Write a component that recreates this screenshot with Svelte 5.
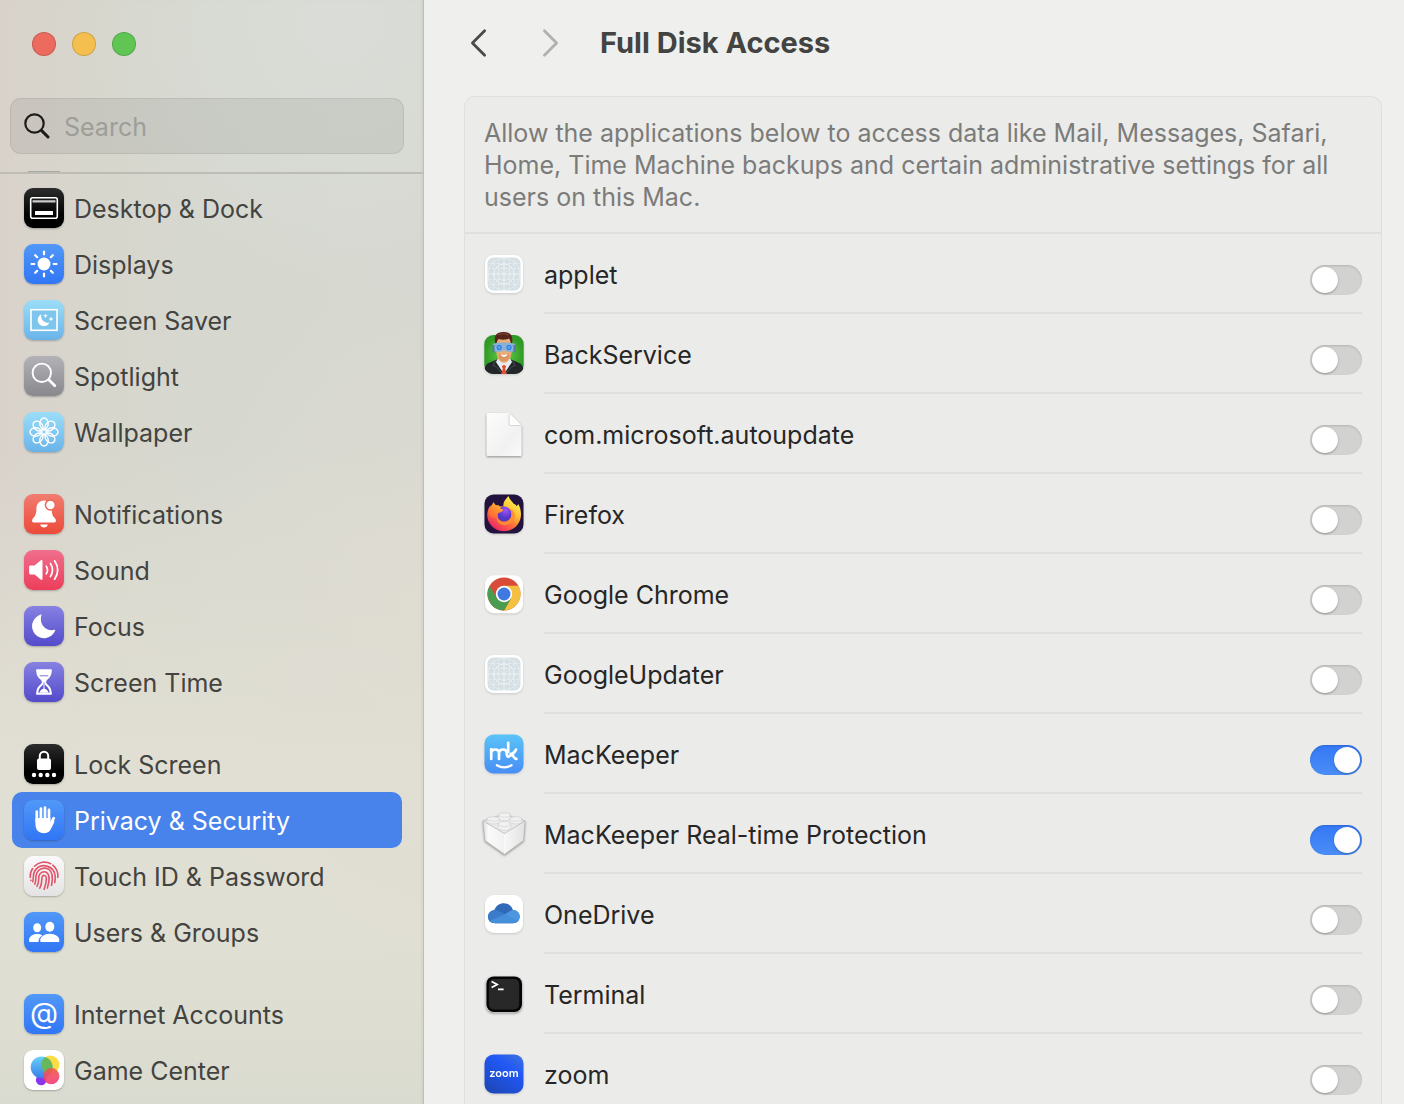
<script lang="ts">
  interface NavItem {
    id: string;
    label: string;
  }

  interface App {
    id: string;
    icon: string;
    name: string;
    allowed: boolean;
  }

  const groups: NavItem[][] = [
    [
      { id: 'desktop', label: 'Desktop & Dock' },
      { id: 'displays', label: 'Displays' },
      { id: 'screensaver', label: 'Screen Saver' },
      { id: 'spotlight', label: 'Spotlight' },
      { id: 'wallpaper', label: 'Wallpaper' },
    ],
    [
      { id: 'notifications', label: 'Notifications' },
      { id: 'sound', label: 'Sound' },
      { id: 'focus', label: 'Focus' },
      { id: 'screentime', label: 'Screen Time' },
    ],
    [
      { id: 'lock', label: 'Lock Screen' },
      { id: 'privacy', label: 'Privacy & Security' },
      { id: 'touchid', label: 'Touch ID & Password' },
      { id: 'users', label: 'Users & Groups' },
    ],
    [
      { id: 'internet', label: 'Internet Accounts' },
      { id: 'gamecenter', label: 'Game Center' },
    ],
  ];

  let apps = $state<App[]>([
    { id: 'applet', icon: 'generic', name: 'applet', allowed: false },
    { id: 'backservice', icon: 'agent', name: 'BackService', allowed: false },
    { id: 'autoupdate', icon: 'document', name: 'com.microsoft.autoupdate', allowed: false },
    { id: 'firefox', icon: 'firefox', name: 'Firefox', allowed: false },
    { id: 'chrome', icon: 'chrome', name: 'Google Chrome', allowed: false },
    { id: 'updater', icon: 'generic', name: 'GoogleUpdater', allowed: false },
    { id: 'mackeeper', icon: 'mackeeper', name: 'MacKeeper', allowed: true },
    { id: 'realtime', icon: 'brick', name: 'MacKeeper Real-time Protection', allowed: true },
    { id: 'onedrive', icon: 'onedrive', name: 'OneDrive', allowed: false },
    { id: 'terminal', icon: 'terminal', name: 'Terminal', allowed: false },
    { id: 'zoom', icon: 'zoom', name: 'zoom', allowed: false },
  ]);

  let selected = $state('privacy');
  let query = $state('');

  const petals = [0, 45, 90, 135, 180, 225, 270, 315];
</script>

{#snippet navIcon(id: string)}
  <svg class="tile {id}" viewBox="0 0 40 40" aria-hidden="true">
    {#if id === 'desktop'}
      <rect x="6.7" y="9.7" width="26.6" height="20.6" rx="2" fill="none" stroke="#fff" stroke-width="1.6" />
      <path d="M8.5 13.4h23" stroke="#ccc" stroke-width="2.2" />
      <rect x="11" y="23" width="18" height="4" rx=".6" fill="#fff" />
    {:else if id === 'displays'}
      <circle cx="20" cy="20" r="6.5" fill="#fff" />
      {#each petals as angle}
        <path d="M20 7.5v2.8" transform="rotate({angle} 20 20)" stroke="#fff" stroke-width="2.2" stroke-linecap="round" />
      {/each}
    {:else if id === 'screensaver'}
      <rect x="7" y="9.7" width="26" height="20.6" fill="#7dc5ec" stroke="#fff" stroke-width="1.6" />
      <path d="M17.5 14.2a6.2 6.2 0 1 0 8 8.4 6.6 6.6 0 0 1-8-8.4z" fill="#fff" />
      <path d="M21.5 13.4l.7 1.7 1.7.7-1.7.7-.7 1.7-.7-1.7-1.7-.7 1.7-.7zM27 16.4l.7 1.9 1.9.7-1.9.7-.7 1.9-.7-1.9-1.9-.7 1.9-.7z" fill="#fff" />
    {:else if id === 'spotlight'}
      <circle cx="17.8" cy="16.8" r="9.2" fill="none" stroke="#fff" stroke-width="1.9" />
      <path d="M24.8 23.8l6 6" stroke="#fff" stroke-width="2.7" stroke-linecap="round" />
    {:else if id === 'wallpaper'}
      {#each petals as angle}
        <ellipse cx="20" cy="11.6" rx="4.2" ry="5.6" transform="rotate({angle} 20 20)" fill="none" stroke="#fff" stroke-width="1.4" />
      {/each}
      <circle cx="20" cy="20" r="1.8" fill="#8fd0f2" stroke="#fff" stroke-width=".8" />
    {:else if id === 'notifications'}
      <path d="M20 6.6c-5 0-7.5 3.6-7.6 8.2-.1 5.5-1.2 7.3-3.5 9.7-1.2 1.3-1.3 3.9.8 3.9h20.6c2.1 0 2-2.6.8-3.9-2.3-2.4-3.4-4.2-3.5-9.7-.1-4.6-2.6-8.2-7.6-8.2z" fill="#fff" />
      <path d="M16.2 30.4h7.6c-.4 1.8-1.8 3-3.8 3s-3.4-1.2-3.8-3z" fill="#fff" />
      <circle cx="26.4" cy="11" r="5" fill="#fff" stroke="#f06455" stroke-width="1.5" />
    {:else if id === 'sound'}
      <path d="M6.4 15.6h4.2l6-5.2c.9-.7 1.9-.3 1.9.9v17.4c0 1.2-1 1.6-1.9.9l-6-5.2H6.4c-.8 0-1.3-.5-1.3-1.3v-6.2c0-.8.5-1.3 1.3-1.3z" fill="#fff" />
      <path d="M22.3 16.2q2.4 3.8 0 7.6M26.4 13.4q4.2 6.6 0 13.2M30.6 10.8q6.2 9.2 0 18.4" fill="none" stroke="#fff" stroke-width="1.7" stroke-linecap="round" />
    {:else if id === 'focus'}
      <path d="M16.8 8.6c.5-.3.9 0 .7.5-2.9 8.2 4 17 13 14.7.6-.1 1 .3.7.8A12 12 0 1 1 16.8 8.6z" fill="#fff" />
    {:else if id === 'screentime'}
      <path d="M13.2 7.2h13.6c1.3 0 1.300 1.4.9 2.400-.3 4.600-2.600 6.500-4.700 8.500-1.200 1.100-1.200 2.700 0 3.800 2.100 2 4.400 3.900 4.700 8.500.4 1 .4 2.400-.9 2.400H13.200c-1.300 0-1.300-1.400-.9-2.400.3-4.600 2.600-6.500 4.700-8.500 1.200-1.100 1.200-2.700 0-3.800-2.100-2-4.400-3.900-4.700-8.500-.4-1-.4-2.400.9-2.400z" fill="#fff" />
      <path d="M14.400 30.800c.2-4 2-5.400 3.800-7.200 1-1 1.300-2 1.300-3.600h1c0 1.600.3 2.600 1.300 3.600 1.800 1.800 3.600 3.200 3.800 7.200z" fill="#5f57d0" />
      <path d="M15.400 30.800c.8-2.600 2.600-4 4.600-4.300 2 .3 3.800 1.700 4.600 4.300zM19.500 19h1v8h-1z" fill="#fff" />
      <path d="M14.400 9.400h11.200l-.6 3.400H15z" fill="#fff" />
      <path d="M15.700 13.800h8.600" stroke="#6b64d5" stroke-width=".9" />
    {:else if id === 'lock'}
      <rect x="13" y="14.5" width="14" height="11.5" rx="2" fill="#fff" />
      <path d="M15.8 16v-4a4.2 4.2 0 0 1 8.4 0v4" fill="none" stroke="#fff" stroke-width="2" />
      {#each [10, 16.7, 23.3, 30] as x}
        <circle cx={x} cy="31" r="2.2" fill="#fff" />
      {/each}
    {:else if id === 'privacy'}
      <g fill="none" stroke="#fff" stroke-linecap="round">
        <path d="M12.8 11.5v10M16.9 8.500v12M21 7.500v12M25 9.800v12" stroke-width="2.7" />
        <path d="M29.7 18.2l-3.4 7" stroke-width="2.8" />
      </g>
      <path d="M11.450 18h14.900v5.2l2-2.800 2.300 1-3 6.2c-1.600 3.800-3.500 5.6-7.500 5.6-5.700 0-8.700-3.5-8.700-9.200z" fill="#fff" />
    {:else if id === 'touchid'}
      <g fill="none" stroke="#e0536b" stroke-width="1.6" stroke-linecap="round">
        <path d="M10.5 10.2a14 14 0 0 1 16.2-2.500M28.800 9.200a14 14 0 0 1 5 12.300M6.300 21.500a14 14 0 0 1 2.300-9M6.900 24.600v-.4" />
        <path d="M8.800 25.800c1-6-.1-9 3-12.400a11.200 11.200 0 0 1 19.400 6.600c.1 2.500 0 4.500-.5 6.500" />
        <path d="M10.800 28.200c1.400-3.300.7-6.700 1.500-9.700a8.400 8.400 0 0 1 12.900-4.800c4.300 3 3.500 9.800 2.300 15.600" />
        <path d="M13 30.400c2.400-4.500 1.300-7.700 2-10.500a5.300 5.300 0 0 1 7.700-3.400c3.800 2.600 2.600 9.300.7 15.500" />
        <path d="M15.800 32.200c2.600-4.600 1.700-9 2.300-11.300.7-2.200 4.100-2 4.300 1 .1 3.700-.8 7.300-2.300 11.300" />
      </g>
    {:else if id === 'users'}
      <g fill="#fff">
        <ellipse cx="13.2" cy="15.800" rx="4" ry="4.500" />
        <path d="M5 28.400c0-3.700 3.600-6.400 8.200-6.400 2 0 3.800.5 5.100 1.300-2.200 1.400-3.500 3.300-3.900 6.600H6.300C5.500 29.900 5 29.400 5 28.400z" />
        <ellipse cx="25.8" cy="14.800" rx="4.500" ry="5" />
        <path d="M16.2 28.400c0-3.700 4-6.700 9.600-6.700s9.600 3 9.600 6.700c0 1-.6 1.500-1.500 1.500H17.700c-.9 0-1.500-.5-1.500-1.500z" />
      </g>
    {:else if id === 'internet'}
      <text x="20" y="28.5" text-anchor="middle" font-size="29" fill="#fff">@</text>
    {:else if id === 'gamecenter'}
      <defs>
        <linearGradient id="gc-blue" x2="0" y2="1"><stop stop-color="#69d2fa" /><stop offset="1" stop-color="#3a7ee8" /></linearGradient>
        <linearGradient id="gc-red" x2="0" y2="1"><stop stop-color="#f0594b" /><stop offset="1" stop-color="#f33a78" /></linearGradient>
        <clipPath id="gc-clip"><circle cx="17.6" cy="17.3" r="10.9" /></clipPath>
      </defs>
      <circle cx="17.2" cy="30" r="5.3" fill="#8a35ee" />
      <circle cx="26.2" cy="14.8" r="9.2" fill="#fbdc45" />
      <circle cx="17.6" cy="17.3" r="10.9" fill="url(#gc-blue)" />
      <circle cx="26.2" cy="14.8" r="9.2" fill="#67b85b" clip-path="url(#gc-clip)" />
      <circle cx="27.3" cy="26.2" r="8.1" fill="url(#gc-red)" opacity=".9" />
    {/if}
  </svg>
{/snippet}

{#snippet appIcon(kind: string)}
  <svg class="app-icon" viewBox="0 0 40 40" aria-hidden="true">
    {#if kind === 'generic'}
      <rect x="1" y="1" width="38" height="38" rx="8.5" fill="#fff" />
      <rect x="3.5" y="3.5" width="33" height="33" rx="6" fill="#d5dfe3" />
      <g fill="none" stroke="#edf3f4" stroke-width=".6">
        <path d="M20 3.500v33M3.500 20h33" stroke-width="1" />
        <path d="M9.500 3.500v33M14.500 3.500v33M25.500 3.500v33M30.500 3.500v33M3.500 9.500h33M3.500 14.500h33M3.500 25.500h33M3.500 30.500h33" opacity=".7" />
        <path d="M5 5l30 30M35 5L5 35" opacity=".7" />
        <circle cx="20" cy="20" r="16" />
        <circle cx="20" cy="20" r="10" stroke-width="1" />
        <circle cx="20" cy="20" r="6.5" />
      </g>
    {:else if kind === 'agent'}
      <defs>
        <radialGradient id="agent-bg"><stop stop-color="#66d248" /><stop offset="1" stop-color="#2f9a25" /></radialGradient>
        <clipPath id="agent-clip"><path d="M0-3h40v33a9 9 0 0 1-9 10H9a9 9 0 0 1-9-10z" /></clipPath>
      </defs>
      <rect x=".3" y="1" width="39.4" height="39" rx="9" fill="url(#agent-bg)" />
      <g clip-path="url(#agent-clip)">
        <path d="M0 40c0-7 2-10.500 7-12l7-3h12l7 3c5 1.500 7 5 7 12z" fill="#222629" />
        <path d="M13.5 25h13l1.500 3-8 12-8-12z" fill="#e7edf4" />
        <path d="M12 26.500l-3 5 3 1 7 7.500M28 26.500l3 5-3 1-7 7.500" fill="none" stroke="#4a4e51" />
        <path d="M20 30.500l2.2 2-1 2 1.500 5.500h-5.400l1.500-5.500-1-2z" fill="#e4502f" />
        <path d="M12.5 11c0-5.500 3-8 7.500-8s7.500 2.500 7.500 8c.7 8-.5 13-3.500 16.200-2 2.200-6 2.200-8 0C13 24 11.800 19 12.500 11z" fill="#eaae7a" />
        <path d="M14.5 18.500c0 7 2 8.800 5.500 8.800s5.500-1.800 5.500-8.800l-2 2h-7z" fill="#d99664" />
        <path d="M16.8 20.300q3.300 1.300 6.600-.3-.5 2.800-3.300 2.800t-3.300-2.500z" fill="#fff" />
        <path d="M11.5 10.500C9 .5 13-1.500 19-2c7-.4 11 3.500 8.800 12.500-1.500-1-1-4.500-2.800-6-4 1.800-8 1.200-10.500.4-1.800 1.400-1.500 4.600-3 5.600z" fill="#55251b" />
        <path d="M14 1q5-3 11 0" fill="none" stroke="#854432" />
      </g>
      <path d="M8.8 9.800q11.200-2.500 22.400 0l-.5 7.500q-4 1-8 .5l-2.700-2-2.700 2q-4 .5-8-.5z" fill="#8aafd0" />
      <path d="M9.5 11v7.500M30.500 11v7.500" stroke="#5578a8" stroke-width="2" />
      <circle cx="15.2" cy="13.5" r="3.2" fill="#2a7adf" stroke="#a9cdea" stroke-width=".7" />
      <circle cx="25" cy="13.5" r="3.2" fill="#2a7adf" stroke="#a9cdea" stroke-width=".7" />
      <circle cx="15.2" cy="13.5" r="1.4" fill="#5ba9f3" />
      <circle cx="25" cy="13.5" r="1.4" fill="#5ba9f3" />
    {:else if kind === 'document'}
      <defs><linearGradient id="doc" x2="1" y2="1"><stop stop-color="#fdfdfd" /><stop offset=".65" stop-color="#f1f1f1" /><stop offset="1" stop-color="#fafafa" /></linearGradient></defs>
      <g class="drop">
        <path d="M4-1h21l12.600 12.500v29a1.500 1.500 0 0 1-1.500 1.500H4a1.500 1.500 0 0 1-1.500-1.500V.5A1.500 1.500 0 0 1 4-1z" fill="url(#doc)" />
      </g>
      <path d="M25-1l12.600 12.500H26.300a1.500 1.500 0 0 1-1.300-1.500z" fill="#fdfdfd" />
      <path d="M25 0v10a1.500 1.500 0 0 0 1.500 1.500h10.500" fill="none" stroke="#cfcfcf" stroke-width=".9" />
    {:else if kind === 'firefox'}
      <defs>
        <linearGradient id="ff-body" x1=".85" y1=".1" x2=".25" y2="1"><stop stop-color="#fff04f" /><stop offset=".35" stop-color="#ffbd35" /><stop offset=".6" stop-color="#ff7138" /><stop offset="1" stop-color="#e9206b" /></linearGradient>
        <radialGradient id="ff-globe" cx=".6" cy=".25"><stop stop-color="#a455f8" /><stop offset="1" stop-color="#5438c7" /></radialGradient>
        <linearGradient id="ff-head" x1=".8" y1="0" x2=".2" y2="1"><stop stop-color="#ffb435" /><stop offset="1" stop-color="#ff642f" /></linearGradient>
      </defs>
      <rect x=".5" y=".5" width="39" height="39" rx="9" fill="#21123e" />
      <path d="M24.4 2c1 3.500 3.600 5.300 5.500 8 1.200-.1 2.200 1 2.800 2.300l1.500-2.200C36.600 14 37 18 37 21c-.5 9.500-7.700 16.200-17 16.200S3.200 30 3.200 20.700c0-3.200 1.300-7 3.300-9.400l.5 2.400 2.500-5.400 2.600 3.800 7.400.5C18.500 8.500 21.600 5.300 24.400 2z" fill="url(#ff-body)" />
      <circle cx="20.2" cy="20" r="7.400" fill="url(#ff-globe)" />
      <path d="M9.5 8.300c.7 2.400 3.200 3.800 5.400 2.500-.4 2.300 1.500 4 4.300 4.800.2 1.600-2.400 3-4.800 3.400-.8 1.300-.9 2.700-.4 4.200-4.500 2.500-9.300-1.200-9.600-5 .5-4 3.300-6.500 5.100-9.900z" fill="url(#ff-head)" />
      <path d="M13 22c.7 4.500 3.500 6 7.200 6 4.600 0 7.500-3.200 7.500-7.500 0-2.800-.9-4.500-2.300-6 3.500 1 5.700 4 5.400 7.500-.5 5.500-5.200 9-10.400 9-5.600 0-8.300-4-7.400-9z" fill="#ff8f36" />
    {:else if kind === 'chrome'}
      <rect x="1" y="1.2" width="38" height="38" rx="9" fill="#fff" />
      <circle cx="20" cy="20" r="16.5" fill="#d94a38" />
      <path d="M34.300 11.700H20v8.300l7.100 4.200L20 36.500A16.500 16.500 0 0 0 34.300 11.700z" fill="#f4c042" />
      <path d="M5.700 11.700A16.500 16.500 0 0 0 20 36.500l7.100-12.300-14.200 0z" fill="#4a9c50" />
      <circle cx="20" cy="20" r="8.200" fill="#fff" />
      <circle cx="20" cy="20" r="6.500" fill="#3f79e1" />
    {:else if kind === 'mackeeper'}
      <defs><linearGradient id="mk" x2="0" y2="1"><stop stop-color="#5ac4f7" /><stop offset="1" stop-color="#478df5" /></linearGradient></defs>
      <rect x=".5" y=".5" width="39" height="39" rx="9" fill="url(#mk)" />
      <g fill="none" stroke="#fff" stroke-width="2.7" stroke-linecap="round">
        <path d="M7.200 25v-9.600M7.200 19.500q0-4 4-4 3.800 0 3.800 4V25M15 19.500q0-4 4-4 3.800 0 3.800 4 0 5.500 4.200 1.500M24.200 8.800V18M32 15.600q-2 4.400-6.500 4.600 3 0 4.300 2.800 1 2 2.600 1.900" />
        <path d="M12.800 31.200q7.400 4.200 14.800 0" stroke-width="2.200" />
      </g>
    {:else if kind === 'brick'}
      <defs>
        <linearGradient id="brick-l"><stop stop-color="#dedede" /><stop offset=".25" stop-color="#fafafa" /><stop offset="1" stop-color="#f1f1f1" /></linearGradient>
        <linearGradient id="brick-r"><stop stop-color="#f7f7f7" /><stop offset="1" stop-color="#e2e2e2" /></linearGradient>
      </defs>
      <g class="drop" stroke="#b9b9b9" stroke-width=".7">
        <path d="M-1 7l20.500-6.500L41 7 20.500 20z" fill="#e9e9e9" />
        <path d="M-1 7l21.500 12.500v20.800L1 26.500z" fill="url(#brick-l)" />
        <path d="M41 7L20.500 19.500v20.800L39.500 26.500z" fill="url(#brick-r)" />
      </g>
      <g fill="#f1f1f1" stroke="#c9c9c9" stroke-width=".5">
        <path d="M14.700 1v3.200c0 3.300 11.600 3.300 11.600 0V1z" />
        <ellipse cx="20.5" cy="1" rx="5.8" ry="2.2" />
        <path d="M3.200 5v2.500c0 3 12 3.300 12 0V5zM25.800 5v2.500c0 3 12 3.300 12 0V5z" />
        <ellipse cx="9.2" cy="5" rx="6" ry="2.2" />
        <ellipse cx="31.8" cy="5" rx="6" ry="2.2" />
        <path d="M14.200 10v3.500c0 3.800 12.600 3.800 12.600 0V10z" />
        <ellipse cx="20.5" cy="10" rx="6.3" ry="2.6" />
      </g>
      <path d="M20.500 20v20" stroke="#fff" stroke-width=".9" />
    {:else if kind === 'onedrive'}
      <defs>
        <clipPath id="cloud"><path d="M11.500 29.300C6.800 29.300 4 26.500 4 22.800c0-3.600 2.800-6.300 6.200-6.500C12 11.800 15.500 9.300 19.800 9.300c4.500 0 8 2.800 9.200 6.800 4 .2 6.700 3 6.700 6.700 0 3.600-2.800 6.500-6.700 6.500z" /></clipPath>
      </defs>
      <rect x="1" y="1" width="38" height="38" rx="9" fill="#fff" />
      <g clip-path="url(#cloud)">
        <rect x="3" y="8" width="34" height="23" fill="#3069b8" />
        <path d="M3 14l9 2 12 5-21 10z" fill="#3b7bcb" />
        <path d="M21 20l9-5 9 2v14l-10-4z" fill="#4d96e0" />
        <path d="M3 28l18-8 15 8v4H3z" fill="#468fd9" />
      </g>
    {:else if kind === 'terminal'}
      <g class="drop"><rect x="1.7" y="2" width="36.6" height="36.6" rx="8" fill="#d0d9db" /></g>
      <rect x="2.4" y="2.4" width="35.6" height="35.6" rx="7.5" fill="#050505" />
      <rect x="4.8" y="5" width="30.4" height="30.4" rx="5" fill="#282828" />
      <path d="M7.600 7.500l5.600 3-5.600 3M14 15.400h5.600" fill="none" stroke="#fff" stroke-width="1.7" />
    {:else if kind === 'zoom'}
      <defs><linearGradient id="zm" x1="1" y1="0" x2=".3" y2="1"><stop stop-color="#3f73db" /><stop offset=".4" stop-color="#2158f5" /><stop offset="1" stop-color="#1d48bd" /></linearGradient></defs>
      <rect x=".5" y=".5" width="39" height="39" rx="9" fill="url(#zm)" />
      <text x="20" y="22.5" text-anchor="middle" font-size="11" font-weight="600" fill="#fff">zoom</text>
    {/if}
  </svg>
{/snippet}

<div class="window">
  <aside class="sidebar">
    <header class="sidebar-head">
      <div class="lights">
        <button class="light close" aria-label="Close"></button>
        <button class="light minimise" aria-label="Minimise"></button>
        <button class="light expand" aria-label="Zoom"></button>
      </div>
      <label class="search">
        <svg viewBox="0 0 26 26" aria-hidden="true">
          <circle cx="10.5" cy="10.5" r="9.2" fill="none" stroke="currentColor" stroke-width="2.2" />
          <path d="M17.400 17.400l6.600 6.600" stroke="currentColor" stroke-width="3" stroke-linecap="round" />
        </svg>
        <input type="text" placeholder="Search" aria-label="Search" bind:value={query} />
      </label>
    </header>

    <nav>
      {#each groups as group}
        <ul class="group">
          {#each group as item (item.id)}
            <li>
              <a
                class="nav-item"
                class:selected={selected === item.id}
                href="#{item.id}"
                onclick={() => (selected = item.id)}
              >
                {@render navIcon(item.id)}
                <span>{item.label}</span>
              </a>
            </li>
          {/each}
        </ul>
      {/each}
    </nav>
  </aside>

  <main>
    <header class="toolbar">
      <button class="arrow" aria-label="Back">
        <svg viewBox="0 0 22 32" aria-hidden="true"><path d="M17 3L4 16l13 13" /></svg>
      </button>
      <button class="arrow forward" aria-label="Forward">
        <svg viewBox="0 0 22 32" aria-hidden="true"><path d="M4 3l13 13L4 29" /></svg>
      </button>
      <h1>Full Disk Access</h1>
    </header>

    <section class="card">
      <p class="intro">
        Allow the applications below to access data like Mail, Messages, Safari, Home, Time Machine backups and certain
        administrative settings for all users on this Mac.
      </p>
      <ul class="apps">
        {#each apps as app (app.id)}
          <li class="app">
            {@render appIcon(app.icon)}
            <div class="app-body">
              <label for="allow-{app.id}">{app.name}</label>
              <input id="allow-{app.id}" class="switch" type="checkbox" bind:checked={app.allowed} />
            </div>
          </li>
        {/each}
      </ul>
    </section>
  </main>
</div>

<style>
  :global(body) {
    background: #efefed;
  }

  .window {
    display: grid;
    grid-template-columns: 424px 1fr;
    height: 100vh;
    overflow: hidden;
    font-family: Inter, "Liberation Sans", sans-serif;
    font-size: 25px;
    line-height: 32px;
    color: #262626;
  }

  ul {
    list-style: none;
    margin: 0;
    padding: 0;
  }

  button {
    border: 0;
    padding: 0;
    background: none;
  }

  .sidebar {
    min-height: 0;
    display: flex;
    flex-direction: column;
    box-sizing: border-box;
    border-right: 1px solid #bfbfb8;
    box-shadow: inset -2px 0 2px rgba(0, 0, 0, 0.04);
    background:
      radial-gradient(circle at 340px 20px, rgba(218, 222, 216, 0.9), transparent 260px),
      radial-gradient(ellipse at 100% 56%, rgba(224, 220, 210, 0.7), transparent 240px),
      linear-gradient(transparent 40%, #e1dfd3 68%, #e0dfd3 84%, #dadbd0 100%),
      linear-gradient(90deg, #d9d2cb 0, #d7d6cd 90px, #d6d8d0 240px, #d7d8d1 100%);
  }

  .sidebar-head {
    position: relative;
    padding: 32px 19px 18px 10px;
    border-bottom: 2px solid #bdbdb6;
  }

  /* bottom edge of the row scrolled under the header */
  .sidebar-head::after {
    content: "";
    position: absolute;
    left: 28px;
    bottom: 0;
    width: 32px;
    height: 1px;
    background: #a9a9a3;
  }

  .lights {
    display: flex;
    gap: 16px;
    padding-left: 22px;
    margin-bottom: 42px;
  }

  .light {
    width: 24px;
    height: 24px;
    border-radius: 50%;
    border: 1px solid rgba(0, 0, 0, 0.15);
  }

  .close {
    background: #ed6a5e;
  }

  .minimise {
    background: #f5bf4f;
  }

  .expand {
    background: #61c554;
  }

  .search {
    display: flex;
    align-items: center;
    gap: 14px;
    height: 54px;
    padding: 0 13px;
    border: 1px solid rgba(0, 0, 0, 0.07);
    border-radius: 11px;
    background: rgba(0, 0, 0, 0.065);
  }

  .search svg {
    width: 26px;
    height: 26px;
    flex-shrink: 0;
    color: #1b1b1a;
  }

  .search input {
    flex: 1;
    min-width: 0;
    padding: 2px 0 0;
    border: 0;
    outline: 0;
    background: none;
    font: inherit;
    color: #262626;
  }

  .search input::placeholder {
    color: #9d9e98;
    opacity: 1;
  }

  nav {
    flex: 1;
    min-height: 0;
    overflow: hidden;
    padding: 6px 21px 0 12px;
  }

  .group + .group {
    margin-top: 26px;
  }

  .nav-item {
    display: flex;
    align-items: center;
    gap: 10px;
    height: 56px;
    padding: 0 12px;
    border-radius: 10px;
    color: #434340;
    text-decoration: none;
  }

  .nav-item span {
    padding-top: 2px;
  }

  .nav-item.selected {
    background: #4783ea;
    color: #fff;
  }

  .tile {
    width: 40px;
    height: 40px;
    flex-shrink: 0;
    border-radius: 9px;
    box-shadow: 0 1px 2px rgba(0, 0, 0, 0.25);
    background: linear-gradient(#5198f8, #3176f5);
  }

  .desktop,
  .lock {
    background: linear-gradient(#2c2c2c, #000 70%);
  }

  .screensaver,
  .wallpaper {
    background: linear-gradient(#9bdef8, #69b3e9);
  }

  .spotlight {
    background: linear-gradient(#b2b2b7, #88888d);
  }

  .notifications {
    background: linear-gradient(#f17d70, #ec4a39);
  }

  .sound {
    background: linear-gradient(#f06f8d, #ec3e5a);
  }

  .focus,
  .screentime {
    background: linear-gradient(#8681e2, #534bca);
  }

  .touchid {
    background: linear-gradient(#fafafa, #e3e3e3);
  }

  .gamecenter {
    background: #fff;
  }

  main {
    min-width: 0;
    padding: 0 22px 0 40px;
  }

  .toolbar {
    display: flex;
    align-items: center;
    height: 86px;
    margin-bottom: 10px;
  }

  .arrow {
    display: flex;
    margin: 0 46px 0 4px;
    color: #4a4a49;
  }

  .arrow.forward {
    margin: 0 38px 0 4px;
    color: #b1b1af;
  }

  .arrow svg {
    width: 22px;
    height: 30px;
    fill: none;
    stroke: currentColor;
    stroke-width: 3;
    stroke-linecap: round;
    stroke-linejoin: round;
  }

  h1 {
    margin: 0;
    font-size: 29px;
    font-weight: 700;
    color: #434342;
  }

  .card {
    border: 1px solid #dfdfdd;
    border-radius: 11px;
    background: #ebebe9;
  }

  .intro {
    margin: 0;
    padding: 20px 19px 19px;
    border-bottom: 2px solid #dfdfdd;
    color: #7b7b7a;
  }

  .app {
    display: flex;
    align-items: center;
    gap: 20px;
    padding: 0 19px;
  }

  .app-icon {
    width: 40px;
    height: 40px;
    flex-shrink: 0;
    overflow: visible;
    filter: drop-shadow(0 1px 1px rgba(0, 0, 0, 0.15));
  }

  .drop {
    filter: drop-shadow(0 1px 1px rgba(0, 0, 0, 0.25));
  }

  .app-body {
    flex: 1;
    display: flex;
    align-items: center;
    justify-content: space-between;
    height: 78px;
    border-bottom: 2px solid #dfdfdd;
  }

  .app-body label {
    padding-top: 4px;
  }

  .switch {
    appearance: none;
    display: flex;
    align-items: center;
    box-sizing: border-box;
    width: 52px;
    height: 30px;
    margin: 14px 0 0;
    padding: 2px;
    border-radius: 15px;
    background: #d2d2d0;
    box-shadow: inset 0 1px 2px rgba(0, 0, 0, 0.15);
  }

  .switch::before {
    content: "";
    width: 26px;
    height: 26px;
    border-radius: 50%;
    background: #fff;
    box-shadow: 0 1px 2px rgba(0, 0, 0, 0.3);
  }

  .switch:checked {
    justify-content: flex-end;
    background: linear-gradient(#3478f6, #4a8df7);
  }

  text {
    font-family: Inter, "Liberation Sans", sans-serif;
  }
</style>
